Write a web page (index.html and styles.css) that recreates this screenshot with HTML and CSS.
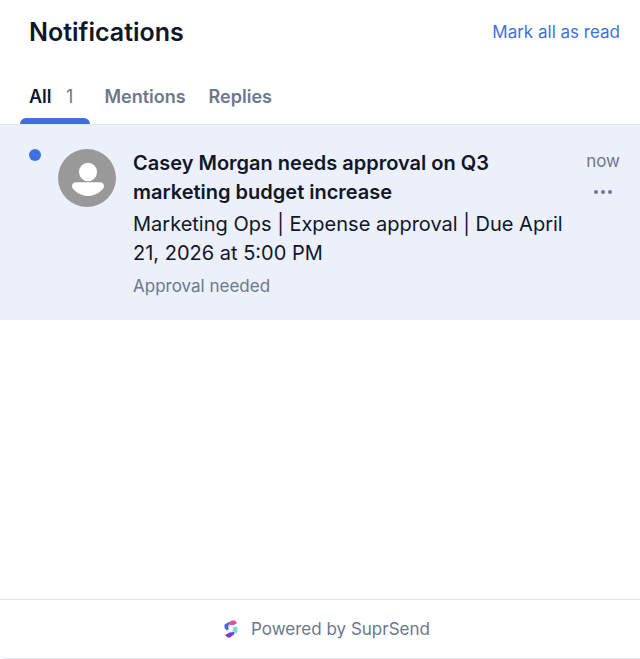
FILE: index.html
```html
<!DOCTYPE html>
<html lang="en">
<head>
    <meta charset="UTF-8">
    <meta name="viewport" content="width=device-width, initial-scale=1.0">
    <title>Notifications</title>
    <link rel="stylesheet" href="styles.css">
</head>
<body>
    <div class="inbox">
        <header class="inbox-header">
            <h1>Notifications</h1>
            <button type="button" class="mark-read">Mark all as read</button>
        </header>
        <div class="tabs" role="tablist">
            <button type="button" class="tab active" role="tab" aria-selected="true">All <span class="count">1</span></button>
            <button type="button" class="tab" role="tab" aria-selected="false">Mentions</button>
            <button type="button" class="tab" role="tab" aria-selected="false">Replies</button>
        </div>
        <main class="list">
            <article class="notification">
                <span class="unread-dot"></span>
                <svg class="avatar" viewBox="0 0 58 58" aria-hidden="true">
                    <circle cx="29" cy="29" r="29" fill="#999999"/>
                    <ellipse cx="30" cy="23" rx="9" ry="9.3" fill="#fff"/>
                    <path d="M18 33.300h24c2.600 0 4 2 4 4.200C46 40 39 47 30 47S14 40 14 37.500C14 35.300 15.400 33.300 18 33.300z" fill="#fff"/>
                </svg>
                <div class="content">
                    <h2>Casey Morgan needs approval on Q3 marketing budget increase</h2>
                    <p class="text">Marketing Ops | Expense approval | Due April 21, 2026 at 5:00 PM</p>
                    <p class="subtext">Approval needed</p>
                </div>
                <div class="meta">
                    <time>now</time>
                    <button type="button" class="more" aria-label="More options">
                        <svg viewBox="0 0 18 4" width="18" height="4">
                            <circle cx="2" cy="2" r="2"/>
                            <circle cx="9" cy="2" r="2"/>
                            <circle cx="16" cy="2" r="2"/>
                        </svg>
                    </button>
                </div>
            </article>
        </main>
        <footer class="inbox-footer">
            <svg class="logo" viewBox="0 0 14 18" aria-hidden="true">
                <path d="M4.500 4 6 5.500 5 7.500 3 8z" fill="#f0a8cc"/>
                <path d="M5 2 8 .500h3L13 3l-3 2H6z" fill="#e0508f"/>
                <path d="M5 2 .500 4.500V8L3 10.500 5 9 4 7.500V5.500L6 4z" fill="#4468dc"/>
                <path d="M9 7.500 12 6.500l1.500 1.500v4L10 14.500 9 13z" fill="#80d8d6"/>
                <path d="M8 8.500 9.500 9v4L8 12.500z" fill="#c4eeee"/>
                <path d="M5.500 12.500 10 12v2.500L6 17.500H3.500L1 15z" fill="#7b3fcf"/>
            </svg>
            <span>Powered by SuprSend</span>
        </footer>
    </div>
</body>
</html>
```
FILE: styles.css
```css
* {
    box-sizing: border-box;
    margin: 0;
    padding: 0;
}
body {
    font-family: Inter, "Liberation Sans", sans-serif;
    background: #ffffff;
    color: #111629;
}
button {
    border: none;
    background: none;
    font-family: inherit;
    cursor: pointer;
}
.inbox {
    display: flex;
    flex-direction: column;
    min-height: 100vh;
    border-bottom: 1px solid #e5e8f2;
    border-bottom-left-radius: 6px;
}
.inbox-header {
    display: flex;
    justify-content: space-between;
    align-items: center;
    padding: 16px 20px 16px 29px;
}
.inbox-header h1 {
    font-size: 25px;
    line-height: 32px;
    font-weight: 600;
}
.mark-read {
    color: #3f70e0;
    font-size: 17px;
    line-height: 28px;
}
.tabs {
    display: flex;
    gap: 5px;
    padding: 8px 20px 0;
    border-bottom: 1px solid #e2e6ee;
}
.tab {
    position: relative;
    padding: 11px 9px 13px;
    color: #6b788e;
    font-size: 18px;
    line-height: 28px;
    font-weight: 600;
}
.tab.active {
    color: #111629;
}
.tab.active::after {
    content: "";
    position: absolute;
    left: 0;
    right: 0;
    bottom: 0;
    height: 6px;
    border-radius: 6px 6px 0 0;
    background: #3f70e0;
}
.count {
    margin: 0 8px 0 10px;
    font-weight: 400;
    color: #6b788e;
}
.list {
    flex: 1;
}
.notification {
    display: flex;
    align-items: flex-start;
    padding: 24px 20px 20px 29px;
    background: #ecf0fb;
}
.unread-dot {
    flex: none;
    width: 12px;
    height: 12px;
    border-radius: 50%;
    background: #3f70e0;
}
.avatar {
    flex: none;
    width: 58px;
    height: 58px;
    margin: 0 17px;
}
.content {
    flex: 1;
}
.content h2,
.text {
    font-size: 20px;
    line-height: 29px;
}
.content h2 {
    font-weight: 600;
    margin-bottom: 3px;
}
.text {
    margin-bottom: 4px;
}
.subtext {
    color: #6b788e;
    font-size: 17px;
    line-height: 28px;
}
.meta {
    display: flex;
    flex-direction: column;
    align-items: center;
    gap: 7px;
    margin-left: 16px;
    color: #6b788e;
    font-size: 17px;
    line-height: 24px;
}
.more {
    display: flex;
    align-items: center;
    height: 24px;
}
.more svg {
    fill: #6b788e;
}
.inbox-footer {
    display: flex;
    justify-content: center;
    align-items: center;
    gap: 13px;
    padding: 16px 16px 16px 30px;
    border-top: 1px solid #dfe5ee;
    color: #6b788e;
    font-size: 17px;
    line-height: 26px;
}
.logo {
    width: 14px;
    height: 18px;
}
```
